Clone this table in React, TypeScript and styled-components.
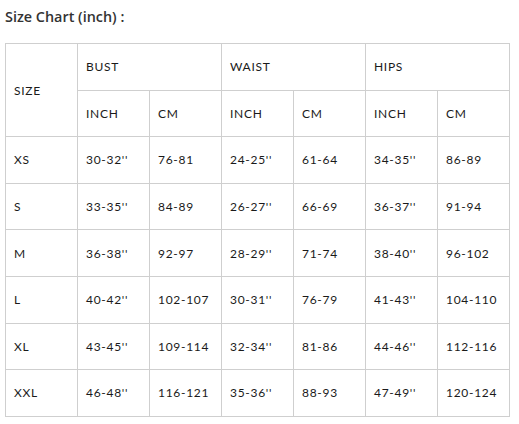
import React from "react";
import styled, { createGlobalStyle } from "styled-components";

const Global = createGlobalStyle`
  html, body { margin: 0; padding: 0; background: #fff; }
  body { font-family: "Lato", "Liberation Sans", sans-serif; }
`;

const Page = styled.div`
  padding: 7px 5px 0 5px;
`;

const Title = styled.h3`
  margin: 0 0 16px 0;
  font-size: 14.4px;
  font-weight: 600;
  color: #333;
  font-family: "Open Sans", "Liberation Sans", sans-serif;
  line-height: 20px;
`;

const Table = styled.table`
  border-collapse: collapse;
  width: 505px;
  table-layout: fixed;
  font-family: "Lato", "Liberation Sans", sans-serif;
`;

const Cell = styled.td`
  border: 1px solid #cfcfcf;
  height: 45.6px;
  padding: 0 0 0 8px;
  font-size: 12px;
  color: #1a1a1a;
  letter-spacing: 0.7px;
  vertical-align: middle;
  text-align: left;
`;

const rows = [
  ["XS", "30-32''", "76-81", "24-25''", "61-64", "34-35''", "86-89"],
  ["S", "33-35''", "84-89", "26-27''", "66-69", "36-37''", "91-94"],
  ["M", "36-38''", "92-97", "28-29''", "71-74", "38-40''", "96-102"],
  ["L", "40-42''", "102-107", "30-31''", "76-79", "41-43''", "104-110"],
  ["XL", "43-45''", "109-114", "32-34''", "81-86", "44-46''", "112-116"],
  ["XXL", "46-48''", "116-121", "35-36''", "88-93", "47-49''", "120-124"],
];

export default function App() {
  return (
    <>
      <Global />
      <Page>
        <Title>Size Chart (inch) :</Title>
        <Table>
          <tbody>
            <tr>
              <Cell rowSpan={2}>SIZE</Cell>
              <Cell colSpan={2}>BUST</Cell>
              <Cell colSpan={2}>WAIST</Cell>
              <Cell colSpan={2}>HIPS</Cell>
            </tr>
            <tr>
              <Cell>INCH</Cell>
              <Cell>CM</Cell>
              <Cell>INCH</Cell>
              <Cell>CM</Cell>
              <Cell>INCH</Cell>
              <Cell>CM</Cell>
            </tr>
            {rows.map((r) => (
              <tr key={r[0]}>
                {r.map((c, i) => (
                  <Cell key={i}>{c}</Cell>
                ))}
              </tr>
            ))}
          </tbody>
        </Table>
      </Page>
    </>
  );
}
